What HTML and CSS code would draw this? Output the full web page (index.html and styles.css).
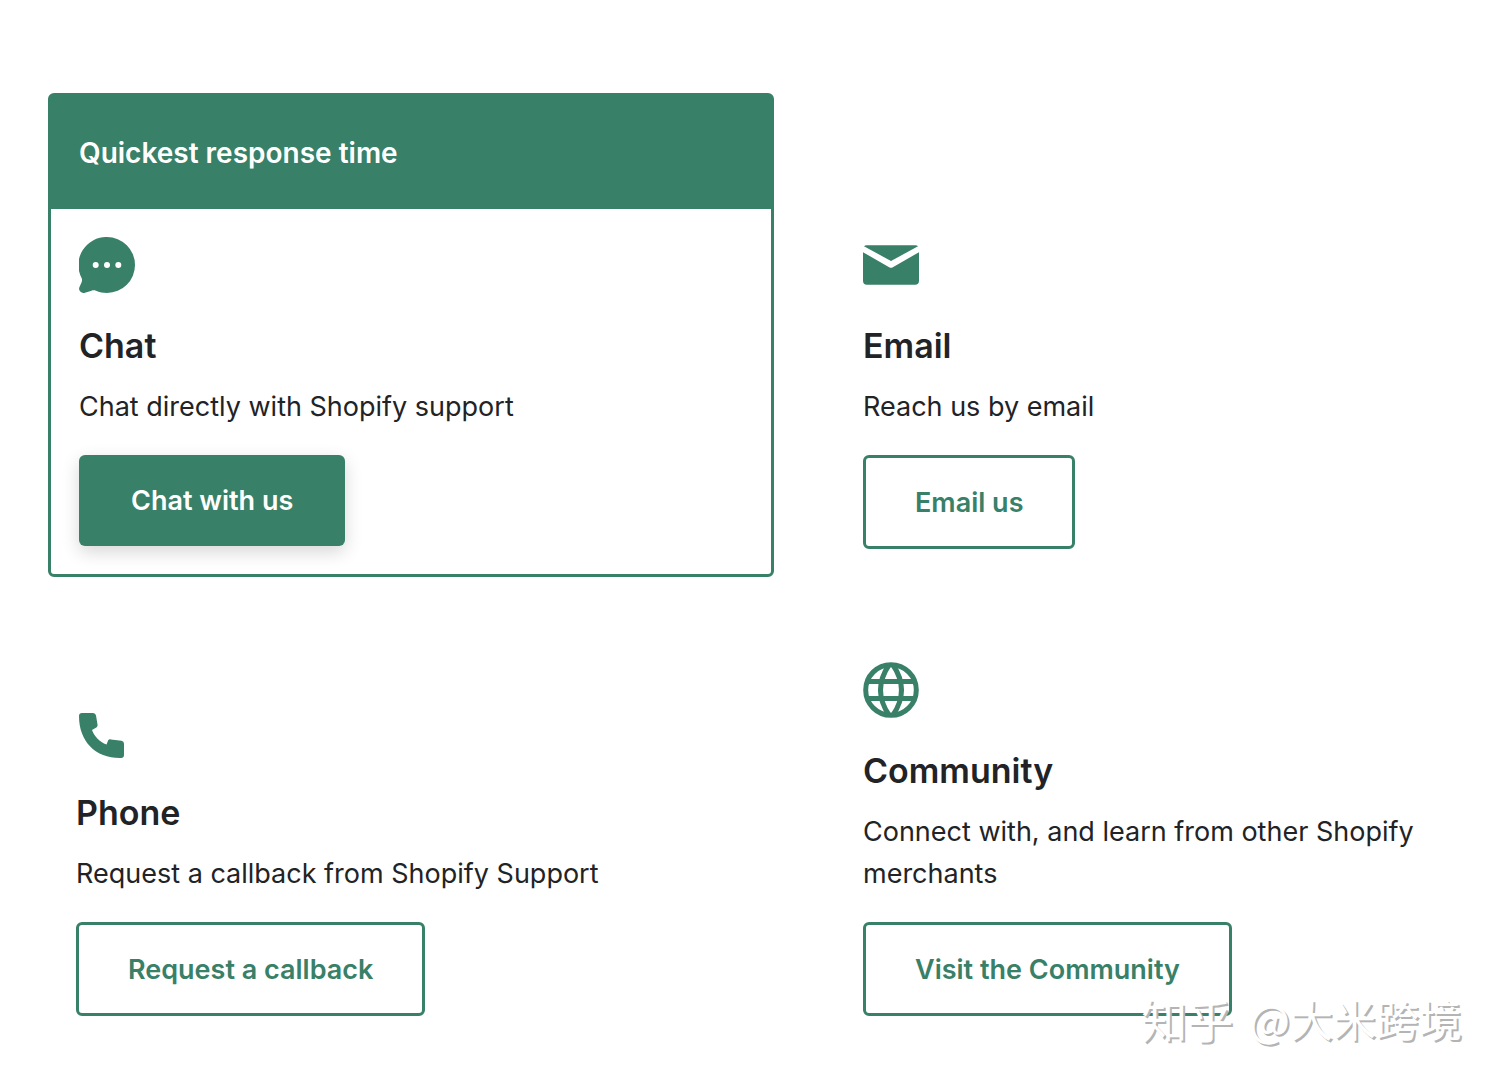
FILE: index.html
```html
<!DOCTYPE html>
<html lang="en">
<head>
  <meta charset="UTF-8">
  <meta name="viewport" content="width=device-width, initial-scale=1.0">
  <title>Contact Shopify Support</title>
  <link rel="stylesheet" href="styles.css">
</head>
<body>

  <main class="options">
    <section class="option featured">
      <p class="banner">Quickest response time</p>
      <div class="content">
        <svg class="icon" viewBox="0 0 56 56" aria-hidden="true">
          <path d="M28 0a28 28 0 1 1 0 56c-4 0-7.500-.8-11-2.200-1.500-.6-3-.6-4.500-.1L6 55.700C2 56.800-1 53.500.4 50.200l2.200-5c.6-1.400.6-2.800 0-4.200A28 28 0 0 1 28 0z"/>
          <circle class="dot" cx="16.700" cy="28" r="3"/>
          <circle class="dot" cx="28" cy="28" r="3"/>
          <circle class="dot" cx="39.300" cy="28" r="3"/>
        </svg>
        <h2>Chat</h2>
        <p class="text">Chat directly with Shopify support</p>
        <button type="button" class="btn btn-primary">Chat with us</button>
      </div>
    </section>

    <section class="option">
      <div class="content">
        <svg class="icon" viewBox="0 0 56 56" aria-hidden="true">
          <path d="M3.500 8.300h49c1 0 1.900.4 2.500 1L28 24 1 9.300c.6-.6 1.500-1 2.500-1z"/>
          <path d="M0 15.200l26.600 15.200c.9.500 1.900.5 2.800 0L56 15.200v28.600a4 4 0 0 1-4 4H4a4 4 0 0 1-4-4z"/>
        </svg>
        <h2>Email</h2>
        <p class="text">Reach us by email</p>
        <button type="button" class="btn">Email us</button>
      </div>
    </section>

    <section class="option">
      <div class="content">
        <svg class="icon icon-phone" viewBox="0 0 50 50" aria-hidden="true">
          <path d="M6 3h11a3 3 0 0 1 3 2.500l1.500 9c.2 1.300-.2 2.300-1.200 3L16 20c2.500 6.500 7.500 12 14.500 14.500l1.300-3.300c.5-1.400 1.500-2 3-1.800l10.700 1.400A3 3 0 0 1 48 33.800V45a3 3 0 0 1-3 3C20 48.500 3 32 3 6a3 3 0 0 1 3-3z"/>
        </svg>
        <h2>Phone</h2>
        <p class="text">Request a callback from Shopify Support</p>
        <button type="button" class="btn">Request a callback</button>
      </div>
    </section>

    <section class="option">
      <div class="content">
        <svg class="icon icon-globe" viewBox="0 0 56 56" aria-hidden="true">
          <circle cx="28" cy="28" r="25.300"/>
          <path d="M26 3Q9 28 26 53M30 3Q47 28 30 53"/>
          <path d="M4 19.500h48M4 36.500h48"/>
        </svg>
        <h2>Community</h2>
        <p class="text">Connect with, and learn from other Shopify merchants</p>
        <button type="button" class="btn">Visit the Community</button>
      </div>
    </section>
  </main>

  <div class="watermark" lang="zh-CN">
    <span class="watermark-site">知乎</span>
    <span>@大米跨境</span>
  </div>

</body>
</html>
```

FILE: styles.css
```css
* {
  box-sizing: border-box;
}

body {
  font-family: Inter, "Noto Sans CJK SC", sans-serif;
  font-size: 27px;
  line-height: 42px;
  color: #212326;
  background-color: #fff;
  margin: 0;
  position: relative;
}

.options {
  display: grid;
  grid-template-columns: 50% 1fr;
  column-gap: 61px;
  row-gap: 57px;
  align-items: end;
  padding: 93px 0 38px 48px;
}

.featured {
  border: 3px solid #388067;
  border-radius: 6px;
}

.banner {
  background-color: #388067;
  color: #fff;
  font-size: 28px;
  font-weight: 600;
  margin: 0;
  padding: 36px 28px 35px;
}

.content {
  padding: 28px;
}

.icon {
  display: block;
  width: 56px;
  height: 56px;
  margin-bottom: 32px;
  fill: #388067;
}

.icon .dot {
  fill: #fff;
}

.icon-phone {
  width: 50px;
  height: 50px;
}

.icon-globe {
  fill: none;
  stroke: #388067;
  stroke-width: 5;
}

h2 {
  font-size: 34px;
  font-weight: 600;
  line-height: 42px;
  margin: 0 0 19px;
}

.text {
  margin: 0 0 27px;
}

.btn {
  display: block;
  font-family: inherit;
  font-size: 27px;
  font-weight: 600;
  line-height: 42px;
  color: #388067;
  background-color: #fff;
  border: 3px solid #388067;
  border-radius: 6px;
  padding: 24px 49px 22px;
  cursor: pointer;
}

.btn-primary {
  color: #fff;
  background-color: #388067;
  border: none;
  padding: 25px 52px 24px;
  box-shadow: 0 6px 18px rgba(0, 0, 0, 0.16);
}

.watermark {
  position: absolute;
  right: 38px;
  bottom: 34px;
  display: flex;
  gap: 16px;
  font-family: "Noto Sans CJK SC", sans-serif;
  font-size: 43px;
  line-height: 60px;
  color: #fff;
  text-shadow: 2px 2px 0 #b4b4b4;
  pointer-events: none;
}

.watermark-site {
  font-size: 46px;
}
```
